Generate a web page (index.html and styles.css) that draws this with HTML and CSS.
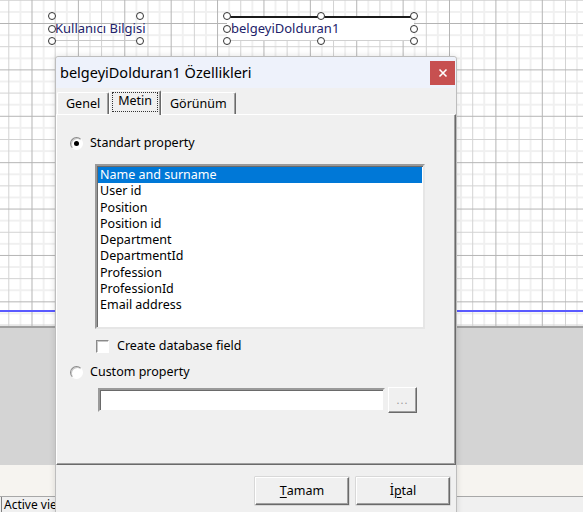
FILE: index.html
```html
<!DOCTYPE html>
<html>
<head>
<meta charset="utf-8">
<link rel="stylesheet" href="styles.css">
</head>
<body>
<div class="screen">
  <div class="canvas">
    <div class="comp comp-label">
      <span class="comp-text">Kullanıcı Bilgisi</span>
      <i class="h h-tl"></i><i class="h h-ml"></i><i class="h h-bl"></i>
      <i class="h h-tr"></i><i class="h h-mr"></i><i class="h h-br"></i>
    </div>
    <div class="comp comp-field">
      <span class="comp-text">belgeyiDolduran1</span>
      <i class="h h-tl"></i><i class="h h-ml"></i><i class="h h-bl"></i>
      <i class="h h-tm"></i><i class="h h-bm"></i>
      <i class="h h-tr"></i><i class="h h-mr"></i><i class="h h-br"></i>
    </div>
    <div class="blue-line"></div>
  </div>
  <div class="gray-area"></div>
  <div class="strip"></div>
  <div class="status"><span class="status-cell">Active view</span></div>

  <div class="dialog">
    <div class="titlebar">
      <span class="title">belgeyiDolduran1 Özellikleri</span>
      <div class="close">
        <svg width="10" height="10" viewBox="0 0 10 10"><path d="M1.5 1.5 L8.5 8.5 M8.5 1.5 L1.5 8.5" stroke="#fff" stroke-width="1.6"/></svg>
      </div>
    </div>
    <div class="tabs">
      <div class="tab">Genel</div>
      <div class="tab tab-active"><span class="focus">Metin</span></div>
      <div class="tab">Görünüm</div>
    </div>
    <div class="panel">
      <div class="row radio-row">
        <span class="radio checked"></span><span class="lbl">Standart property</span>
      </div>
      <div class="listbox">
        <div class="item selected">Name and surname</div>
        <div class="item">User id</div>
        <div class="item">Position</div>
        <div class="item">Position id</div>
        <div class="item">Department</div>
        <div class="item">DepartmentId</div>
        <div class="item">Profession</div>
        <div class="item">ProfessionId</div>
        <div class="item">Email address</div>
      </div>
      <div class="row check-row">
        <span class="checkbox"></span><span class="lbl">Create database field</span>
      </div>
      <div class="row radio-row2">
        <span class="radio"></span><span class="lbl">Custom property</span>
      </div>
      <div class="custom-row">
        <div class="textbox"></div>
        <div class="dots">...</div>
      </div>
    </div>
    <div class="footer">
      <div class="btn"><span class="ul">T</span>amam</div>
      <div class="btn">İ<span class="ul">p</span>tal</div>
    </div>
  </div>
</div>
</body>
</html>
```

FILE: styles.css
```css
* { box-sizing: border-box; }
html, body { margin: 0; padding: 0; }
body {
  font-family: "Noto Sans", "Open Sans", sans-serif;
  font-size: 12.5px;
  color: #000;
}
.screen {
  position: relative;
  width: 583px;
  height: 512px;
  overflow: hidden;
  background: #f0f0f0;
}

/* design canvas with grid */
.canvas {
  position: relative;
  height: 328px;
  background-color: #fff;
  background-image:
    linear-gradient(to right, #b4b4b4 1px, transparent 1px),
    linear-gradient(to bottom, #b4b4b4 1px, transparent 1px),
    linear-gradient(to right, #d2d2d2 1px, transparent 1px),
    linear-gradient(to bottom, #d2d2d2 1px, transparent 1px),
    linear-gradient(to right, #f0f0f0 2px, transparent 2px),
    linear-gradient(to bottom, #f0f0f0 2px, transparent 2px);
  background-size:
    46.4px 100%, 100% 46.4px,
    46.4px 100%, 100% 46.4px,
    23.2px 100%, 100% 23.2px;
  background-position:
    31.5px 0, 0 23px,
    8.3px 0, 0 -0.2px,
    19.5px 0, 0 11px;
  border-bottom: 2px solid #a0a0a0;
}
.blue-line {
  position: absolute;
  left: 0; right: 0;
  top: 310px;
  height: 2px;
  background: #5a5aff;
}
.comp {
  position: absolute;
  top: 16px;
  height: 25px;
}
.comp-label {
  left: 52px;
  width: 88px;
  border-bottom: 1px solid #c8c8c8;
}
.comp-field {
  left: 227px;
  width: 187px;
  background: #fff;
  border-top: 2px solid #1a1a1a;
  border-bottom: 1px solid #d0d0d0;
}
.comp-text {
  position: absolute;
  left: 3px;
  top: 4px;
  font-size: 13px;
  color: #22226a;
  white-space: nowrap;
  line-height: 16px;
}
.comp-field .comp-text { left: 4px; top: 2px; }
.h {
  position: absolute;
  width: 8px; height: 8px;
  border: 1.5px solid #333;
  border-radius: 50%;
  background: #fff;
  margin: -4px 0 0 -4px;
}
.h-tl { left: 0; top: 0; }
.h-ml { left: 0; top: 13px; }
.h-bl { left: 0; top: 25px; }
.h-tr { left: 100%; top: 0; }
.h-mr { left: 100%; top: 13px; }
.h-br { left: 100%; top: 25px; }
.h-tm { left: 50%; top: 0; }
.h-bm { left: 50%; top: 25px; }
.comp-field .h { margin-top: -6px; }
.comp-label .h-mr { display: none; }

.gray-area {
  height: 137px;
  background: #d4d4d4;
}
.strip {
  height: 32px;
  background: #f6f4f0;
  border-bottom: 1px solid #a8a8a8;
}
.status {
  height: 15px;
  background: #f0f0f0;
  padding-left: 1px;
}
.status-cell {
  display: block;
  height: 15px;
  border-left: 1px solid #808080;
  padding: 0 0 0 2px;
  font-size: 12px;
  line-height: 15px;
  white-space: nowrap;
}

/* dialog */
.dialog {
  position: absolute;
  left: 55px;
  top: 56px;
  width: 402px;
  height: 470px;
  background: #f0f0f0;
  border: 1px solid #bdbdbd;
  border-radius: 3px 3px 0 0;
  box-shadow: 0 0 6px rgba(0,0,0,0.12);
}
.titlebar {
  height: 31px;
  background: #eef2fb;
  display: flex;
  align-items: center;
  justify-content: space-between;
  padding-left: 4px;
  border-radius: 3px 3px 0 0;
}
.title {
  font-size: 14.5px;
  padding-bottom: 1px;
}
.close {
  width: 25px;
  height: 24px;
  margin-right: 1px;
  margin-top: 1px;
  background: #c75050;
  display: flex;
  align-items: center;
  justify-content: center;
}
.tabs {
  display: flex;
  align-items: flex-end;
  height: 26px;
  padding-left: 1px;
}
.tab {
  height: 22px;
  padding: 2px 8px 0 8px;
  border-top: 1px solid #fff;
  border-left: 1px solid #fff;
  border-right: 1px solid #6a6a6a;
  box-shadow: inset -1px 0 0 #a0a0a0;
  border-radius: 2px 2px 0 0;
  line-height: 17px;
  white-space: nowrap;
}
.tab-active {
  height: 25px;
  padding: 1px 2px 0 2px;
  margin-bottom: -1px;
  position: relative;
  background: #f0f0f0;
  z-index: 1;
}
.focus {
  display: block;
  border: 1px dotted #333;
  padding: 0 5px 0 5px;
  height: 20px;
  line-height: 15px;
}
.panel {
  height: 351px;
  border-top: 1px solid #fff;
  border-left: 1px solid #fff;
  border-right: 1px solid #6a6a6a;
  border-bottom: 1px solid #6a6a6a;
  box-shadow: inset -1px -1px 0 #a0a0a0;
  padding: 20px 0 0 13px;
}
.row {
  display: flex;
  align-items: center;
  height: 16px;
}
.lbl { line-height: 16px; white-space: nowrap; }
.radio {
  width: 13px; height: 13px;
  border-radius: 50%;
  background: #fff;
  border: 1px solid;
  border-color: #8a8a8a #fff #fff #8a8a8a;
  box-shadow: inset 1px 1px 0 #c8c8c8;
  margin-right: 7px;
  display: flex;
  align-items: center;
  justify-content: center;
}
.radio.checked::after {
  content: "";
  width: 5px; height: 5px;
  border-radius: 50%;
  background: #000;
}
.listbox {
  margin: 13px 0 0 25px;
  width: 330px;
  height: 165px;
  background: #fff;
  border: 2px solid;
  border-color: #9a9a9a #e6e6e6 #e6e6e6 #9a9a9a;
  box-shadow: inset 1px 1px 0 #6a6a6a;
  padding: 1px 1px 0 1px;
}
.item {
  height: 16.25px;
  line-height: 16px;
  padding-left: 2px;
  white-space: nowrap;
}
.item.selected {
  background: #0078d7;
  color: #fff;
}
.check-row { margin: 9px 0 0 26px; }
.checkbox {
  width: 13px; height: 13px;
  background: #fff;
  border: 1px solid;
  border-color: #8a8a8a #fff #fff #8a8a8a;
  box-shadow: inset 1px 1px 0 #c8c8c8;
  margin-right: 8px;
}
.radio-row2 { margin-top: 10px; }
.custom-row {
  display: flex;
  align-items: flex-start;
  margin: 8px 0 0 28px;
  gap: 3px;
}
.textbox {
  width: 287px;
  height: 24px;
  background: #fff;
  border: 2px solid;
  border-color: #9a9a9a #f0f0f0 #f0f0f0 #9a9a9a;
  box-shadow: inset 1px 1px 0 #6a6a6a;
}
.dots {
  width: 29px;
  height: 26px;
  margin-top: -1px;
  border: 1px solid;
  border-color: #fff #6a6a6a #6a6a6a #fff;
  box-shadow: inset -1px -1px 0 #a0a0a0;
  color: #9a9a9a;
  font-size: 11px;
  text-align: center;
  line-height: 24px;
  letter-spacing: 1px;
}
.footer {
  display: flex;
  justify-content: flex-end;
  gap: 7px;
  padding: 12px 6px 0 0;
}
.btn {
  width: 94px;
  height: 28px;
  border: 1px solid;
  border-color: #fff #6a6a6a #6a6a6a #fff;
  box-shadow: inset -1px -1px 0 #a0a0a0, 0 0 0 0.5px #c0c0c0;
  display: flex;
  align-items: center;
  justify-content: center;
  padding-bottom: 1px;
}
.ul { text-decoration: underline; text-underline-offset: 2px; }
```
